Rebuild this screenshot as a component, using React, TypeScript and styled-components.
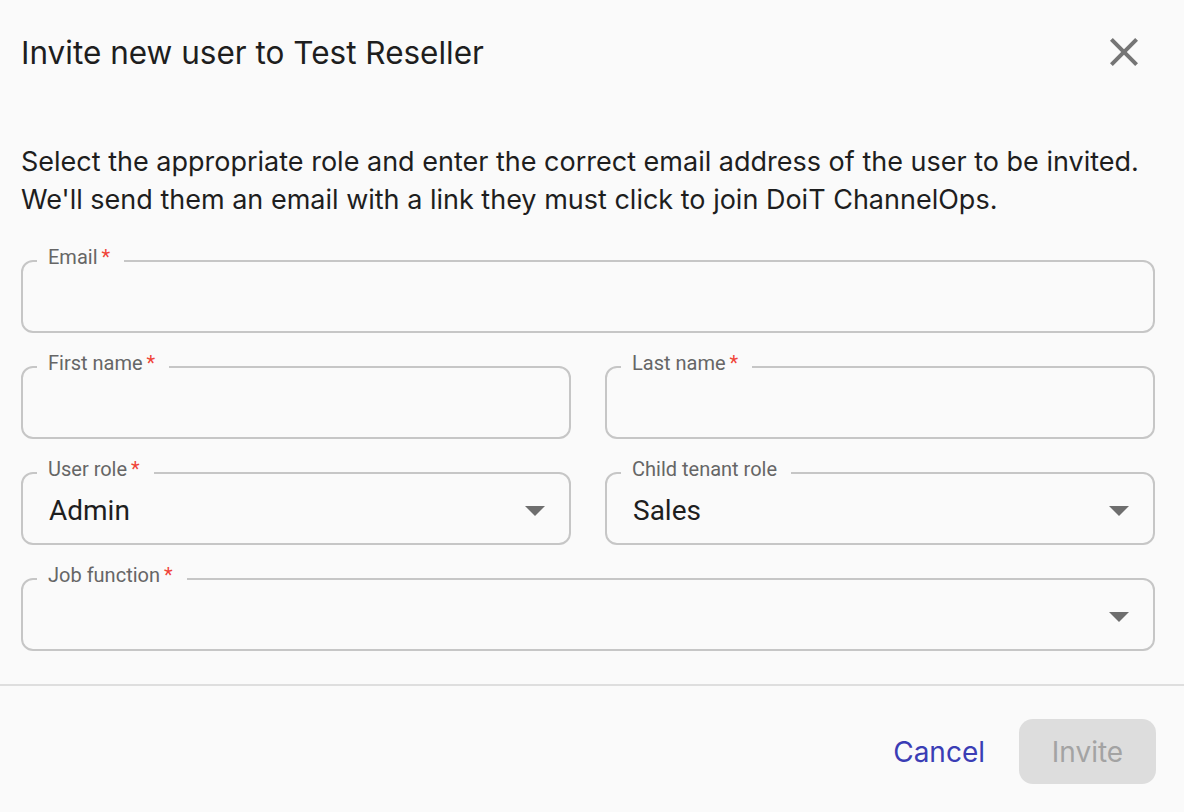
import React from 'react'
import styled, { createGlobalStyle } from 'styled-components'

const GlobalStyle = createGlobalStyle`
    html, body {
        margin: 0;
        padding: 0;
        background: #fafafa;
    }
    * {
        box-sizing: border-box;
    }
`

const Dialog = styled.div`
    width: 1184px;
    height: 812px;
    background: #fafafa;
    display: flex;
    flex-direction: column;
    font-family: Inter, 'Liberation Sans', sans-serif;
    color: #1f1f1f;
`
const Header = styled.div`
    height: 104px;
    display: flex;
    align-items: center;
    justify-content: space-between;
    padding: 0 36px 0 21px;
`
const Title = styled.h2`
    margin: 0;
    font-size: 31.5px;
    font-weight: 400;
    color: #1e1e1e;
`
const CloseButton = styled.button`
    border: none;
    background: none;
    padding: 0;
    width: 48px;
    height: 48px;
    display: flex;
    align-items: center;
    justify-content: center;
    color: #757575;
    cursor: pointer;
`
const Content = styled.div`
    padding: 39px 29px 33px 21px;
    border-bottom: 2px solid #dedede;
`
const Description = styled.p`
    margin: 0 0 27px;
    font-size: 27px;
    line-height: 38px;
    color: #1e1e1e;
`
const FormGrid = styled.div`
    display: grid;
    grid-template-columns: 1fr 1fr;
    column-gap: 34px;
    row-gap: 19px;
`
const Field = styled.fieldset<{ $full?: boolean }>`
    grid-column: ${(p) => (p.$full ? '1 / -1' : 'auto')};
    margin: 0;
    padding: 0 10px 0 26px;
    border: 2px solid #c6c6c6;
    border-radius: 12px;
    min-width: 0;
    font-family: Roboto, 'Liberation Sans', sans-serif;
`
const Legend = styled.legend`
    padding: 0 14px 8px 11px;
    margin-left: -12px;
    font-size: 20px;
    line-height: 22px;
    color: #666666;
`
const Required = styled.span`
    color: #f04438;
    margin-left: 4px;
`
const FieldBody = styled.div`
    height: 55px;
    display: flex;
    align-items: center;
    justify-content: space-between;
    padding-bottom: 11px;
`
const Value = styled.span`
    font-size: 28px;
    color: #1e1e1e;
`
const Arrow = styled.svg`
    width: 48px;
    height: 48px;
    flex-shrink: 0;
    color: #6e6e6e;
`
const Footer = styled.div`
    display: flex;
    justify-content: flex-end;
    align-items: center;
    gap: 18px;
    padding: 33px 28px 0 0;
`
const TextButton = styled.button`
    border: none;
    background: none;
    font-family: Inter, 'Liberation Sans', sans-serif;
    font-size: 28px;
    color: #3a3db5;
    padding: 0 16px;
    height: 65px;
    cursor: pointer;
`
const FilledButton = styled.button`
    border: none;
    background: #dddddd;
    color: #a3a3a3;
    font-family: Inter, 'Liberation Sans', sans-serif;
    font-size: 28px;
    width: 137px;
    height: 65px;
    border-radius: 14px;
`

const DropArrow = () => (
    <Arrow viewBox="0 0 24 24">
        <path d="M7 10l5 5 5-5z" fill="currentColor" />
    </Arrow>
)

const FormField = ({
    label,
    required,
    value,
    select,
    full,
}: {
    label: string
    required?: boolean
    value?: string
    select?: boolean
    full?: boolean
}) => (
    <Field $full={full}>
        <Legend>
            {label}
            {required && <Required>*</Required>}
        </Legend>
        <FieldBody>
            <Value>{value}</Value>
            {select && <DropArrow />}
        </FieldBody>
    </Field>
)

export default function App() {
    return (
        <Dialog>
            <GlobalStyle />
            <Header>
                <Title>Invite new user to Test Reseller</Title>
                <CloseButton aria-label="close">
                    <svg width="48" height="48" viewBox="0 0 24 24">
                        <path
                            d="M19 6.41 17.59 5 12 10.59 6.41 5 5 6.41 10.59 12 5 17.59 6.41 19 12 13.41 17.59 19 19 17.59 13.41 12z"
                            fill="currentColor"
                        />
                    </svg>
                </CloseButton>
            </Header>
            <Content>
                <Description>
                    Select the appropriate role and enter the correct email address of the user to be invited.
                    <br />
                    We'll send them an email with a link they must click to join DoiT ChannelOps.
                </Description>
                <FormGrid>
                    <FormField label="Email" required full />
                    <FormField label="First name" required />
                    <FormField label="Last name" required />
                    <FormField label="User role" required value="Admin" select />
                    <FormField label="Child tenant role" value="Sales" select />
                    <FormField label="Job function" required select full />
                </FormGrid>
            </Content>
            <Footer>
                <TextButton>Cancel</TextButton>
                <FilledButton disabled>Invite</FilledButton>
            </Footer>
        </Dialog>
    )
}
